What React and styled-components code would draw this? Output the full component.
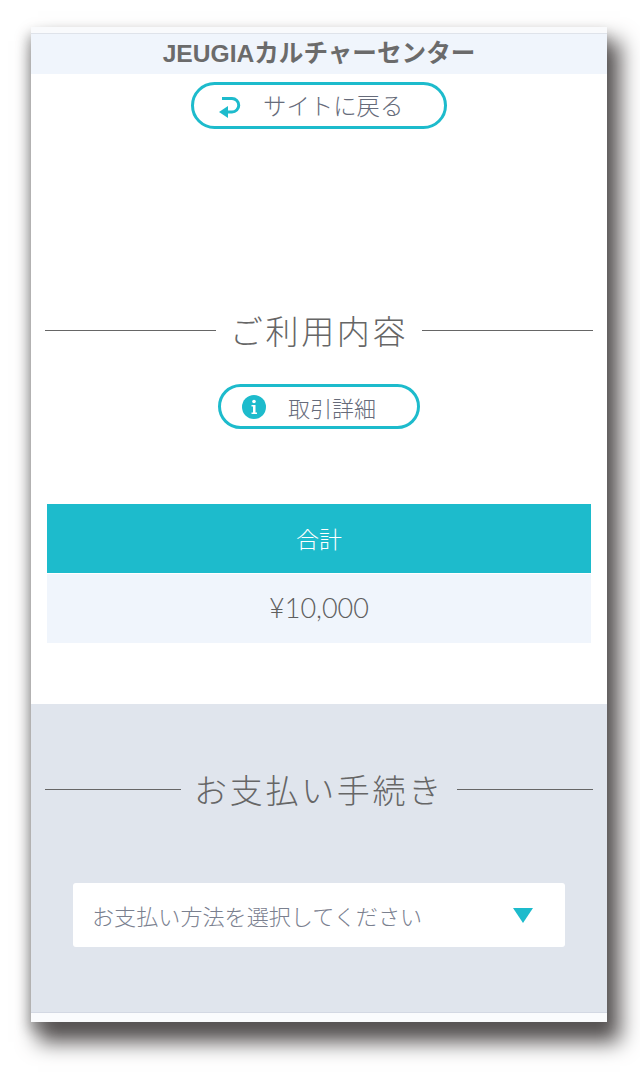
import styled, { createGlobalStyle } from "styled-components";

const GlobalStyle = createGlobalStyle`
  html, body {
    margin: 0;
    padding: 0;
    background: #fff;
  }

  body {
    font-family: "Noto Sans CJK JP", "Noto Sans", sans-serif;
    font-weight: 300;
    color: #666;
  }
`;

const Page = styled.div`
  height: 1075px;
  padding: 27px 33px 0 31px;
  box-sizing: border-box;
  overflow: hidden;
`;

const Frame = styled.main`
  height: 995px;
  display: flex;
  flex-direction: column;
  background: #fff;
  box-shadow: 10px 17px 20px 3px #565252, -2px 8px 12px rgba(0, 0, 0, 0.3);
`;

const TopStrip = styled.div`
  height: 6px;
  flex: none;
  background: #f9fafc;
  border-bottom: 1px solid #dfe3ea;
`;

const SiteTitle = styled.h1`
  margin: 0;
  height: 40px;
  flex: none;
  display: flex;
  align-items: center;
  justify-content: center;
  background: #f0f5fc;
  font-family: "Liberation Sans", "Noto Sans CJK JP", sans-serif;
  font-size: 24.6px;
  font-weight: 700;
  line-height: 40px;
  color: #6b6b6b;
  white-space: nowrap;
`;

const Section = styled.section`
  flex: none;
  display: flex;
  flex-direction: column;
  align-items: center;
`;

const PillButton = styled.a`
  display: flex;
  align-items: center;
  box-sizing: border-box;
  width: ${(props) => props.$width}px;
  height: ${(props) => props.$height}px;
  margin-top: ${(props) => props.$top}px;
  padding-left: ${(props) => props.$left}px;
  gap: ${(props) => props.$gap}px;
  border: 3px solid #1dbbcc;
  border-radius: 24px;
  background: #fff;
  color: #666b7a;
  font-size: ${(props) => props.$size}px;
  line-height: 1;
  white-space: nowrap;
`;

const Heading = styled.div`
  display: flex;
  align-items: center;
  justify-content: space-between;
  width: 548px;
  margin-top: ${(props) => props.$top}px;
  font-size: 33px;
  letter-spacing: 2.7px;
  line-height: 46px;
  color: #666;
  white-space: nowrap;

  &::before,
  &::after {
    content: "";
    height: 1px;
    width: ${(props) => props.$line}px;
    background: #666;
  }
`;

const Summary = styled.div`
  width: 544px;
  margin-top: 75px;
`;

const SummaryHead = styled.div`
  height: 69px;
  padding-bottom: 2px;
  box-sizing: border-box;
  display: flex;
  align-items: center;
  justify-content: center;
  background: #1dbbcc;
  color: #fff;
  font-size: 23px;
`;

const SummaryCell = styled.div`
  height: 69px;
  margin-top: 1px;
  padding-bottom: 2px;
  box-sizing: border-box;
  display: flex;
  align-items: center;
  justify-content: center;
  background: #f0f5fc;
  color: #5f5f5f;
  font-family: "Lato", "Noto Sans", sans-serif;
  font-size: 27px;
  font-weight: 300;
`;

const PaymentSection = styled(Section)`
  height: 309px;
  margin-top: 61px;
  background: #e0e5ed;
  border-bottom: 1px solid #d3d8e3;
  box-sizing: border-box;
`;

const Select = styled.div`
  box-sizing: border-box;
  width: 492px;
  height: 64px;
  margin-top: 71px;
  padding: 0 32px 0 19px;
  display: flex;
  align-items: center;
  justify-content: space-between;
  background: #fff;
  border-radius: 3px;
  color: #7a808f;
  font-size: 22.1px;
  white-space: nowrap;
`;

const Caret = styled.span`
  width: 0;
  height: 0;
  border-left: 10px solid transparent;
  border-right: 10px solid transparent;
  border-top: 15px solid #1dbbcc;
`;

const BottomStrip = styled.div`
  flex: 1;
  background: #fafbfd;
`;

function BackIcon() {
  return (
    <svg width="22" height="24" viewBox="0 0 22 24" fill="none">
      <path d="M3 4.500h10a6.750 6.750 0 0 1 0 13.500H8" stroke="#1dbbcc" strokeWidth="3" />
      <path d="M0 18 9 12v12z" fill="#1dbbcc" />
    </svg>
  );
}

function InfoIcon() {
  return (
    <svg width="24" height="24" viewBox="0 0 24 24">
      <circle cx="12" cy="12" r="12" fill="#1dbbcc" />
      <circle cx="12" cy="6.500" r="1.800" fill="#fff" />
      <path d="M9.500 10h4v7.500H15V19H9.500v-1.500H11v-6H9.500z" fill="#fff" />
    </svg>
  );
}

export default function App() {
  return (
    <Page>
      <GlobalStyle />
      <Frame>
        <TopStrip />
        <SiteTitle>JEUGIAカルチャーセンター</SiteTitle>
        <Section>
          <PillButton $width={256} $height={47} $top={8} $left={25} $gap={22} $size={23.4}>
            <BackIcon />
            サイトに戻る
          </PillButton>
          <Heading $top={178} $line={171}>ご利用内容</Heading>
          <PillButton $width={202} $height={45} $top={31} $left={21} $gap={22} $size={22}>
            <InfoIcon />
            取引詳細
          </PillButton>
          <Summary>
            <SummaryHead>合計</SummaryHead>
            <SummaryCell>¥10,000</SummaryCell>
          </Summary>
        </Section>
        <PaymentSection>
          <Heading $top={62} $line={136}>お支払い手続き</Heading>
          <Select>
            お支払い方法を選択してください
            <Caret />
          </Select>
        </PaymentSection>
        <BottomStrip />
      </Frame>
    </Page>
  );
}
